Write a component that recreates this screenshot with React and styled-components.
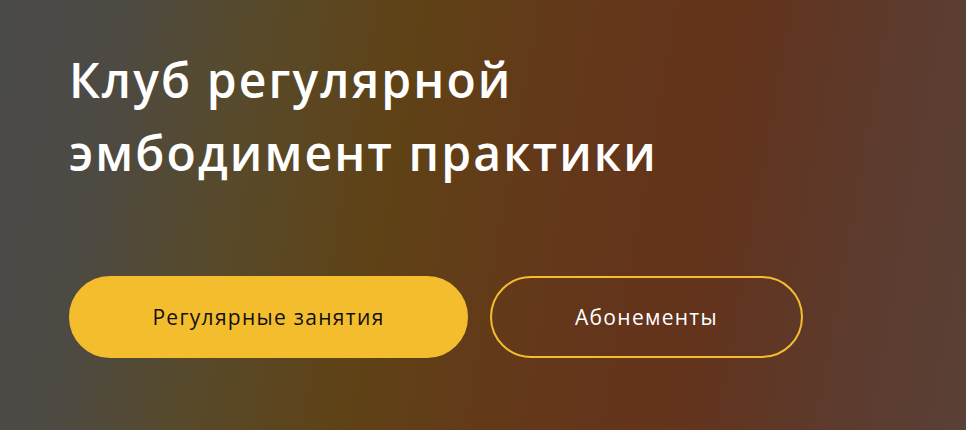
import React from "react";
import styled, { createGlobalStyle } from "styled-components";

const Global = createGlobalStyle`
  html, body { margin: 0; padding: 0; }
  body { font-family: "Open Sans", "Noto Sans", sans-serif; }
`;

const Hero = styled.section`
  box-sizing: border-box;
  width: 966px;
  height: 430px;
  padding: 43px 0 0 69px;
  display: flex;
  flex-direction: column;
  background: linear-gradient(
    100deg,
    #4a4a49 0%,
    #4d4a43 12%,
    #574a2c 24%,
    #5f4216 40%,
    #64371a 58%,
    #63331c 72%,
    #5c3b2e 88%,
    #5a4036 100%
  );
  overflow: hidden;
`;

const Title = styled.h1`
  margin: 0;
  font-family: "Open Sans", sans-serif;
  font-weight: 600;
  font-size: 48px;
  line-height: 73px;
  color: #ffffff;
  letter-spacing: 2.1px;
`;

const Actions = styled.div`
  display: flex;
  gap: 22px;
  margin-top: 87px;
`;

const Button = styled.a`
  box-sizing: border-box;
  display: flex;
  align-items: center;
  justify-content: center;
  height: 82px;
  width: ${(p) => p.$w}px;
  border-radius: 41px;
  font-family: "Open Sans", sans-serif;
  font-weight: 500;
  font-size: 21px;
  letter-spacing: 1.3px;
  text-decoration: none;
  cursor: pointer;
  background: ${(p) => (p.$primary ? "#f4bd2d" : "transparent")};
  color: ${(p) => (p.$primary ? "#111111" : "#ffffff")};
  border: 2px solid #f4bd2d;
`;

export default function App() {
  return (
    <>
      <Global />
      <Hero>
        <Title>
          Клуб регулярной
          <br />
          эмбодимент практики
        </Title>
        <Actions>
          <Button $primary $w={399}>Регулярные занятия</Button>
          <Button $w={313}>Абонементы</Button>
        </Actions>
      </Hero>
    </>
  );
}
